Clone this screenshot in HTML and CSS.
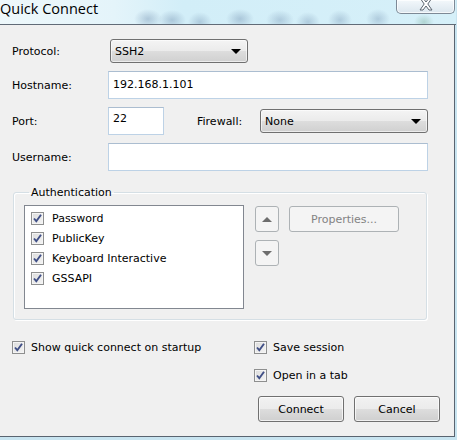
FILE: index.html
```html
<!DOCTYPE html>
<html lang="en">
<head>
  <meta charset="UTF-8" />
  <title>Quick Connect</title>
  <link rel="stylesheet" href="styles.css">
</head>
<body>
  <div class="window">
    <div class="titlebar">
      <span class="title">Quick Connect</span>
      <div class="close">
        <svg width="16" height="12" viewBox="0 0 16 12">
          <path d="M2 -2 L5 -2 L8 2 L11 -2 L14 -2 L9.8 4 L14 10 L11 10 L8 6 L5 10 L2 10 L6.2 4 Z" fill="#fff" stroke="#5b6570" stroke-width="1" stroke-linejoin="round"/>
        </svg>
      </div>
    </div>

    <div class="client">
      <div class="row row-protocol">
        <label class="lbl">Protocol:</label>
        <div class="combo combo-protocol"><span>SSH2</span><i class="arrow"></i></div>
      </div>
      <div class="row">
        <label class="lbl">Hostname:</label>
        <div class="field field-wide">192.168.1.101</div>
      </div>
      <div class="row">
        <label class="lbl">Port:</label>
        <div class="field field-port">22</div>
        <label class="lbl-firewall">Firewall:</label>
        <div class="combo combo-firewall"><span>None</span><i class="arrow"></i></div>
      </div>
      <div class="row">
        <label class="lbl">Username:</label>
        <div class="field field-wide"></div>
      </div>

      <fieldset class="group">
        <legend>Authentication</legend>
        <div class="group-body">
          <ul class="listbox">
            <li><span class="check"></span>Password</li>
            <li><span class="check"></span>PublicKey</li>
            <li><span class="check"></span>Keyboard Interactive</li>
            <li><span class="check"></span>GSSAPI</li>
          </ul>
          <div class="movers">
            <button class="btn-small"><i class="tri-up"></i></button>
            <button class="btn-small"><i class="tri-down"></i></button>
          </div>
          <button class="btn-props" disabled>Properties...</button>
        </div>
      </fieldset>

      <div class="options">
        <div class="opt"><span class="check"></span>Show quick connect on startup</div>
        <div class="opt"><span class="check"></span>Save session</div>
        <div></div>
        <div class="opt"><span class="check"></span>Open in a tab</div>
      </div>

      <div class="actions">
        <button class="btn">Connect</button>
        <button class="btn">Cancel</button>
      </div>
    </div>
  </div>
</body>
</html>
```

FILE: styles.css
```css
html, body {
  margin: 0;
  padding: 0;
}
body {
  width: 457px;
  height: 440px;
  overflow: hidden;
  background: #c8e4f0;
  font-family: 'DejaVu Sans', Tahoma, sans-serif;
  font-size: 11px;
  color: #000;
}
.window {
  width: 456px;
}
.titlebar {
  height: 24px;
  display: flex;
  justify-content: space-between;
  border-bottom: 1px solid #616b77;
  background:
    radial-gradient(ellipse 14px 10px at 148px 19px, rgba(120,150,180,0.45), transparent),
    radial-gradient(ellipse 14px 10px at 172px 20px, rgba(120,150,180,0.45), transparent),
    radial-gradient(ellipse 12px 10px at 200px 22px, rgba(120,150,180,0.4), transparent),
    radial-gradient(ellipse 14px 10px at 240px 19px, rgba(120,150,180,0.45), transparent),
    radial-gradient(ellipse 14px 10px at 280px 20px, rgba(120,150,180,0.4), transparent),
    radial-gradient(ellipse 12px 10px at 308px 22px, rgba(120,150,180,0.4), transparent),
    radial-gradient(ellipse 12px 10px at 340px 20px, rgba(120,150,180,0.4), transparent),
    radial-gradient(ellipse 12px 10px at 378px 19px, rgba(120,150,180,0.4), transparent),
    radial-gradient(ellipse 10px 8px at 424px 22px, rgba(120,170,150,0.4), transparent),
    linear-gradient(90deg, #eef8fb 0%, #e4f4fa 25%, #d2eef8 40%, #d6f0f9 100%);
}
.title {
  font-family: 'Open Sans', 'Noto Sans', sans-serif;
  font-size: 14.5px;
  line-height: 17px;
  color: #000;
}
.close {
  width: 57px;
  height: 13px;
  margin-right: 1px;
  border: 1px solid #7d8996;
  border-top: none;
  border-radius: 0 0 5px 5px;
  background: linear-gradient(#f3f8fb, #dbe6ee);
  display: flex;
  justify-content: center;
  box-shadow: inset 0 0 0 1px rgba(255,255,255,0.7);
}
.close svg {
  display: block;
}

.client {
  width: 455px;
  height: 412px;
  box-sizing: border-box;
  background: #f0f0f0;
  border-right: 1px solid #5a6470;
  border-bottom: 1px solid #5a6470;
  padding: 14px 0 0 12px;
}

.row {
  display: flex;
  align-items: center;
  height: 28px;
  margin-bottom: 8px;
}
.row-protocol {
  height: 24px;
}
.lbl {
  width: 96px;
  flex: none;
}
.lbl-firewall {
  margin-left: 33px;
  width: 63px;
}

.field {
  box-sizing: border-box;
  height: 28px;
  border: 1px solid #bdd2e6;
  border-top-color: #abbdd0;
  background: #fff;
  padding: 6px 0 0 4px;
  line-height: 13px;
}
.field-wide {
  width: 320px;
}
.field-port {
  width: 56px;
  padding-top: 4px;
}

.combo {
  box-sizing: border-box;
  height: 24px;
  border: 1px solid #707070;
  border-radius: 3px;
  background: linear-gradient(#f4f4f4 0%, #ebebeb 50%, #dddddd 51%, #d0d0d0 100%);
  display: flex;
  align-items: center;
  justify-content: space-between;
  padding: 0 6px 0 4px;
  box-shadow: inset 0 0 0 1px rgba(255,255,255,0.6);
}
.combo-protocol {
  width: 138px;
  margin-left: 2px;
}
.combo-firewall {
  width: 168px;
}
.arrow {
  width: 0;
  height: 0;
  border-left: 5px solid transparent;
  border-right: 5px solid transparent;
  border-top: 5px solid #000;
}

.group {
  margin: 15px 0 0 1px;
  width: 414px;
  box-sizing: border-box;
  height: 134px;
  padding: 0 0 0 10px;
  border: 1px solid #d5dfe5;
  border-radius: 3px;
  box-shadow: inset 1px 1px 0 #fff, 1px 1px 0 #fff;
}
.group legend {
  padding: 0 2px;
  margin-left: 5px;
  line-height: 13px;
}
.group-body {
  display: flex;
  align-items: flex-start;
  padding-top: 6px;
}
.listbox {
  list-style: none;
  margin: 0;
  padding: 2px 0 0 6px;
  width: 220px;
  height: 104px;
  box-sizing: border-box;
  border: 1px solid #828790;
  background: #fff;
}
.listbox li {
  display: flex;
  align-items: center;
  height: 20px;
}
.listbox .check {
  margin-right: 8px;
}

.check {
  flex: none;
  width: 13px;
  height: 13px;
  box-sizing: border-box;
  border: 1px solid #8e8f8f;
  background:
    url("data:image/svg+xml,%3Csvg xmlns='http://www.w3.org/2000/svg' width='11' height='11'%3E%3Cpath d='M2 5.5 L4.3 8.2 L9 1.8' fill='none' stroke='%23404f86' stroke-width='1.9'/%3E%3C/svg%3E") center/11px 11px no-repeat,
    linear-gradient(135deg, #dcdcdc, #f4f4f4);
  box-shadow: inset 0 0 0 1px #f4f4f4;
}

.movers {
  display: flex;
  flex-direction: column;
  gap: 8px;
  margin-left: 11px;
  margin-top: 1px;
}
.btn-small {
  width: 24px;
  height: 26px;
  padding: 0;
  border: 1px solid #adb2b5;
  border-radius: 3px;
  background: #f4f4f4;
  display: flex;
  align-items: center;
  justify-content: center;
}
.tri-up, .tri-down {
  width: 0;
  height: 0;
  border-left: 5px solid transparent;
  border-right: 5px solid transparent;
}
.tri-up {
  border-bottom: 5px solid #6d6d6d;
}
.tri-down {
  border-top: 5px solid #6d6d6d;
}
.btn-props {
  margin: 1px 0 0 10px;
  width: 110px;
  height: 26px;
  border: 1px solid #adb2b5;
  border-radius: 3px;
  background: #f4f4f4;
  color: #838383;
  font: inherit;
  padding: 0;
}

.options {
  display: grid;
  grid-template-columns: 242px 1fr;
  grid-auto-rows: 20px;
  row-gap: 8px;
  margin-top: 17px;
}
.opt {
  display: flex;
  align-items: center;
  gap: 6px;
}

.actions {
  display: flex;
  justify-content: flex-end;
  gap: 10px;
  margin-top: 11px;
  padding-right: 14px;
}
.btn {
  width: 86px;
  height: 26px;
  border: 1px solid #707070;
  border-radius: 3px;
  background: linear-gradient(#f2f2f2 0%, #ebebeb 50%, #dddddd 51%, #cfcfcf 100%);
  box-shadow: inset 0 0 0 1px rgba(255,255,255,0.7);
  font: inherit;
  color: #000;
  padding: 0;
}
```
